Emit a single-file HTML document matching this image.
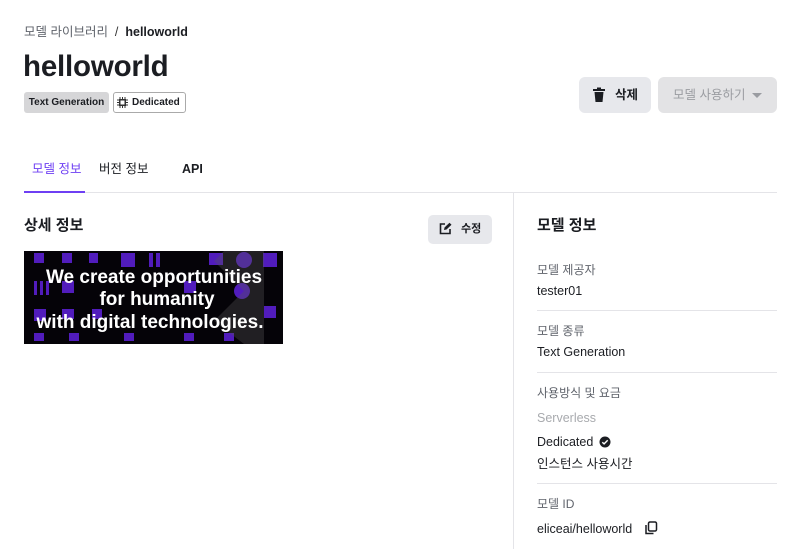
<!DOCTYPE html>
<html><head><meta charset="utf-8"><style>
*{margin:0;padding:0;box-sizing:border-box}
body{width:798px;height:549px;overflow:hidden;background:#fff;font-family:"Liberation Sans","Noto Sans CJK KR",sans-serif;color:#1b1d22;position:relative}
.a{position:absolute;white-space:nowrap;line-height:16px}
.lbl{font-size:12px;color:#5f636b}
.val{font-size:12.5px;color:#1b1d22}
.hr{position:absolute;height:1px;background:#e4e4e8}
</style></head><body>
<div class="a" style="left:24px;top:24px;font-size:12.5px;color:#5f636b">모델 라이브러리 &nbsp;<span style="color:#333">/</span>&nbsp; <b style="color:#1b1d22">helloworld</b></div>
<div class="a" style="left:23px;top:51px;font-size:29.5px;line-height:32px;font-weight:bold;letter-spacing:-0.2px">helloworld</div>
<div class="a" style="left:24px;top:92px;height:21px;width:85px;background:#d6d6d8;border-radius:3px;font-size:10px;font-weight:bold;line-height:21px;text-align:center">Text Generation</div>
<div class="a" style="left:113px;top:92px;height:21px;width:73px;border:1px solid #aaa;border-radius:3px;font-size:10px;font-weight:bold;line-height:19px;padding-left:18px">Dedicated</div>
<svg class="a" style="left:117px;top:97px" width="11" height="11" viewBox="0 0 11 11"><rect x="2" y="2" width="7" height="7" fill="#333"/><path d="M3 0v11M5.5 0v11M8 0v11M0 3h11M0 5.5h11M0 8h11" stroke="#333" stroke-width="1"/><rect x="3.5" y="3.5" width="4" height="4" fill="#fff"/></svg>
<div class="a" style="left:579px;top:77px;width:72px;height:36px;background:#e7e8ec;border-radius:6px;font-size:12.5px;font-weight:bold;line-height:36px;padding-left:36px">삭제</div>
<svg class="a" style="left:592px;top:87px" width="14" height="16" viewBox="0 0 14 16"><rect x="1" y="2" width="12" height="2" fill="#1b1d22"/><rect x="5" y="0.5" width="4" height="2" fill="#1b1d22"/><path d="M2.5 5h9l-1 10h-7z" fill="#1b1d22"/></svg>
<div class="a" style="left:658px;top:77px;width:119px;height:36px;background:#e3e3e5;border-radius:6px;font-size:12.5px;color:#9a9ca1;line-height:36px;padding-left:15px">모델 사용하기</div>
<div class="a" style="left:752px;top:93px;border-left:5px solid transparent;border-right:5px solid transparent;border-top:5px solid #9a9ca1"></div>
<div class="a" style="left:32px;top:161px;font-size:12.5px;color:#6e3ff3">모델 정보</div>
<div class="a" style="left:99px;top:161px;font-size:12.5px">버전 정보</div>
<div class="a" style="left:182px;top:161px;font-size:12.5px;font-weight:bold">API</div>
<div class="hr" style="left:24px;top:192px;width:753px"></div>
<div class="a" style="left:24px;top:191px;width:61px;height:2px;background:#6e3ff3"></div>
<div class="a" style="left:513px;top:193px;width:1px;height:356px;background:#e4e4e8"></div>
<div class="a" style="left:24px;top:218px;font-size:15px;font-weight:bold">상세 정보</div>
<div class="a" style="left:428px;top:215px;width:64px;height:29px;background:#e7e8ec;border-radius:5px;font-size:11px;font-weight:bold;line-height:29px;padding-left:33px">수정</div>
<svg class="a" style="left:439px;top:222px" width="13" height="13" viewBox="0 0 13 13"><path d="M6 2H1.5v9.5H11V7" fill="none" stroke="#1b1d22" stroke-width="1.6"/><path d="M5 8l.5-2.5L10.5.8l2 2L7.5 7.5z" fill="#1b1d22"/></svg>
<svg class="a" style="left:24px;top:251px" width="259" height="93" viewBox="0 0 259 93">
<rect width="259" height="93" fill="#050308"/>
<g fill="#5a1fd0" opacity="0.9">
<rect x="10" y="2" width="10" height="10"/><rect x="38" y="2" width="10" height="10"/><rect x="65" y="2" width="9" height="10"/><rect x="97" y="2" width="14" height="14"/><rect x="125" y="2" width="4" height="14"/><rect x="132" y="2" width="4" height="14"/><rect x="185" y="2" width="14" height="12"/><circle cx="220" cy="9" r="8"/><rect x="239" y="2" width="14" height="14"/>
<rect x="10" y="30" width="3" height="14"/><rect x="16" y="30" width="3" height="14"/><rect x="22" y="30" width="3" height="14"/><rect x="38" y="30" width="12" height="12"/><rect x="160" y="30" width="12" height="12"/><circle cx="218" cy="40" r="8"/>
<rect x="10" y="58" width="12" height="12"/><rect x="38" y="58" width="12" height="10"/><rect x="68" y="58" width="10" height="10"/><rect x="240" y="55" width="12" height="12"/>
<rect x="10" y="82" width="10" height="8"/><rect x="45" y="82" width="10" height="8"/><rect x="100" y="82" width="10" height="8"/><rect x="160" y="82" width="10" height="8"/><rect x="200" y="82" width="10" height="8"/>
</g>
<path d="M190 10l30 30-30 30 30 23h20V0h-40z" fill="#555" opacity="0.35"/>
<g fill="#fff" font-family="Liberation Sans,sans-serif" font-weight="bold" font-size="19" text-anchor="middle">
<text x="130" y="32">We create opportunities</text>
<text x="133" y="54">for humanity</text>
<text x="126" y="77">with digital technologies.</text></g>
</svg>
<div class="a" style="left:537px;top:218px;font-size:15px;font-weight:bold">모델 정보</div>
<div class="a lbl" style="left:537px;top:262px">모델 제공자</div>
<div class="a val" style="left:537px;top:283px">tester01</div>
<div class="hr" style="left:537px;top:310px;width:240px"></div>
<div class="a lbl" style="left:537px;top:323px">모델 종류</div>
<div class="a val" style="left:537px;top:344px">Text Generation</div>
<div class="hr" style="left:537px;top:372px;width:240px"></div>
<div class="a lbl" style="left:537px;top:385px">사용방식 및 요금</div>
<div class="a val" style="left:537px;top:410px;color:#a8aaae">Serverless</div>
<div class="a val" style="left:537px;top:434px">Dedicated</div>
<svg class="a" style="left:599px;top:436px" width="12" height="12" viewBox="0 0 12 12"><circle cx="6" cy="6" r="5.5" fill="#1b1d22"/><path d="M3.3 6.2l1.8 1.7 3.6-3.6" fill="none" stroke="#fff" stroke-width="1.4"/></svg>
<div class="a val" style="left:537px;top:456px">인스턴스 사용시간</div>
<div class="hr" style="left:537px;top:483px;width:240px"></div>
<div class="a lbl" style="left:537px;top:496px">모델 ID</div>
<div class="a val" style="left:537px;top:521px">eliceai/helloworld</div>
<svg class="a" style="left:644px;top:521px" width="14" height="14" viewBox="0 0 14 14"><rect x="4.5" y="1" width="8" height="9" rx="1.5" fill="none" stroke="#1b1d22" stroke-width="1.5"/><path d="M2 4v8.5h7.5" fill="none" stroke="#1b1d22" stroke-width="1.5"/></svg>
</body></html>
